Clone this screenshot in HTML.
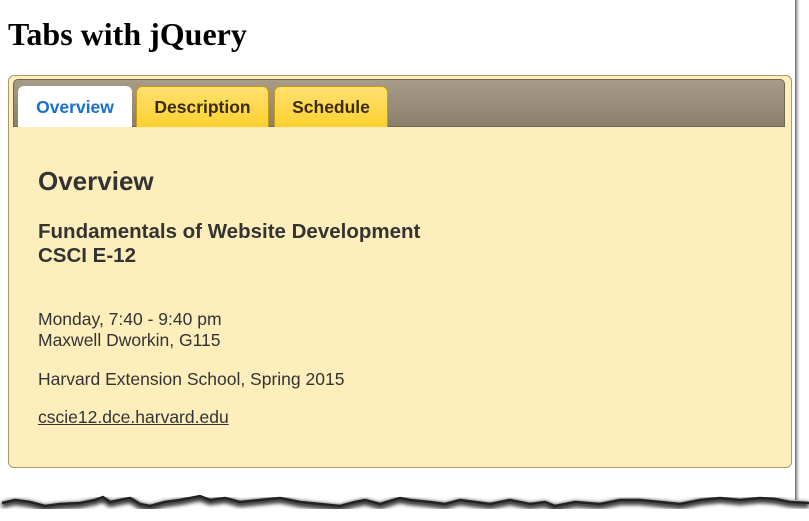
<!DOCTYPE html>
<html><head><style>
body{margin:0;width:809px;height:521px;background:#fff;position:relative;overflow:hidden;font-family:"Liberation Sans",sans-serif}
h1{position:absolute;left:8px;top:16px;margin:0;font:bold 32px "Liberation Serif",serif;color:#000}
.panel{position:absolute;left:8px;top:75px;width:782px;height:391px;background:#feeebb;border:1px solid #a8986c;border-radius:6px}
.bar{position:absolute;left:13px;top:79px;width:772px;height:48px;border:1px solid #6f6551;border-radius:5px 5px 0 0;background:linear-gradient(#a69c88,#8a806c);box-sizing:border-box}
.tab{position:absolute;top:86px;height:41px;border:1px solid #c99a10;border-bottom:none;border-radius:6px 6px 0 0;background:linear-gradient(#fee070,#fdd22e);box-sizing:border-box;font:bold 17.5px "Liberation Sans",sans-serif;color:#3a2c05;text-align:center;line-height:40px}
.ov{background:#fff;border-color:#fff;color:#1a6fcc}
.c{position:absolute;left:38px;color:#333}
</style></head><body>
<div style="position:absolute;left:795px;top:0;width:5px;height:500px;background:linear-gradient(90deg,#666,#ccc,#fff)"></div>
<h1>Tabs with jQuery</h1>
<div class="panel"></div>
<div class="bar"></div>
<div class="tab ov" style="left:18px;width:114px">Overview</div>
<div class="tab" style="left:136px;width:133px">Description</div>
<div class="tab" style="left:274px;width:114px">Schedule</div>
<div class="c" style="top:166px;font:bold 26px 'Liberation Sans',sans-serif;color:#333">Overview</div>
<div class="c" style="top:220px;font:bold 20.5px/24px 'Liberation Sans',sans-serif">Fundamentals of Website Development<br>CSCI E-12</div>
<div class="c" style="top:309px;font:17.5px/21px 'Liberation Sans',sans-serif">Monday, 7:40 - 9:40 pm<br>Maxwell Dworkin, G115</div>
<div class="c" style="top:369px;font:17.5px 'Liberation Sans',sans-serif">Harvard Extension School, Spring 2015</div>
<div class="c" style="top:407px;font:17.5px 'Liberation Sans',sans-serif;text-decoration:underline">cscie12.dce.harvard.edu</div>
<svg style="position:absolute;left:0;top:494px" width="809" height="27">
<defs><filter id="b"><feGaussianBlur stdDeviation="2"/></filter></defs>
<polyline filter="url(#b)" fill="none" stroke="#111" stroke-width="5" points="2,11 15,8 30,10 45,14 60,12 80,11 95,8 103,5 110,10 130,6 140,12 150,14 165,10 180,8 200,4 210,8 225,6 240,10 260,8 280,6 300,10 320,12 340,14 355,10 365,8 380,12 400,6 410,8 430,10 445,12 460,8 475,10 490,12 510,8 530,12 545,10 555,14 575,10 600,12 620,8 640,8 660,10 680,12 700,8 720,6 740,8 760,6 775,7 790,10 809,11"/>
<polyline fill="none" stroke="#222" stroke-width="2.5" points="2,9 15,6 30,8 45,12 60,10 80,9 95,6 103,3 110,8 130,4 140,10 150,12 165,8 180,6 200,2 210,6 225,4 240,8 260,6 280,4 300,8 320,10 340,12 355,8 365,6 380,10 400,4 410,6 430,8 445,10 460,6 475,8 490,10 510,6 530,10 545,8 555,12 575,8 600,10 620,6 640,6 660,8 680,10 700,6 720,4 740,6 760,4 775,5 790,8 809,9"/>
</svg>
</body></html>
